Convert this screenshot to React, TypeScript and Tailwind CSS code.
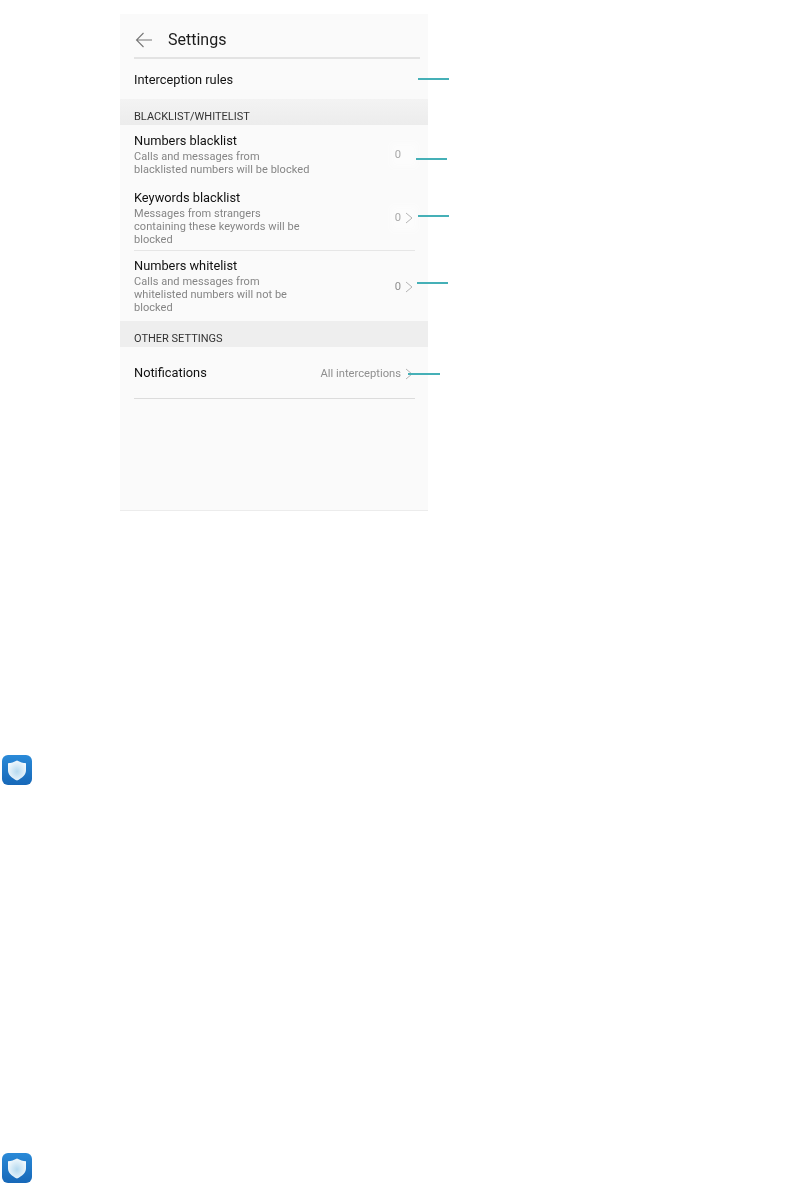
import React from "react";

function Chevron() {
  return (
    <svg width="8" height="12" viewBox="0 0 8 12" fill="none">
      <path d="M1 1l6 5-6 5" stroke="#b4b4b4" strokeWidth="1" />
    </svg>
  );
}

function ShieldIcon({ id }: { id: string }) {
  return (
    <div className="w-[30px] h-[30px] rounded-[6px] bg-gradient-to-b from-[#2a8ad8] to-[#1768b8] flex items-center justify-center">
      <svg width="20" height="23" viewBox="0 0 20 23">
        <defs>
          <radialGradient id={id} cx="0.5" cy="0.55" r="0.6">
            <stop offset="0" stopColor="#b5d9ef" />
            <stop offset="1" stopColor="#f6fbfe" />
          </radialGradient>
        </defs>
        <path
          d="M10 1.500c3 1.700 6 2.500 9 2.700v7c0 4.500-4 8-9 10.300C5 19.200 1 15.700 1 11.200v-7c3-.2 6-1 9-2.700z"
          fill={`url(#${id})`}
        />
      </svg>
    </div>
  );
}

function Callout({ top, left, width }: { top: number; left: number; width: number }) {
  return <div className="absolute h-[2px] bg-[#45b0b7]" style={{ top, left, width }} />;
}

function Row({
  title,
  lines,
  value,
  chevron = true,
  blurred = false,
  className = "",
}: {
  title: string;
  lines: string[];
  value: string;
  chevron?: boolean;
  blurred?: boolean;
  className?: string;
}) {
  return (
    <div className={`flex items-center justify-between pl-[14px] pr-[15px] ${className}`}>
      <div>
        <div className="text-[12.8px] leading-[16px] text-[#111111]">{title}</div>
        {lines.length > 0 && (
          <div className="mt-[1px]">
            {lines.map((l) => (
              <div key={l} className="text-[11px] leading-[13px] tracking-[0.05px] text-[#858585]">
                {l}
              </div>
            ))}
          </div>
        )}
      </div>
      <div className="pt-[2px]">
        <div
          className={`flex items-center gap-[4px] text-[11.2px] ${
            blurred ? "text-[#a8a8a8] bg-[#fcfcfc] shadow-[0_0_6px_4px_#fcfcfc]" : "text-[#8f8f8f]"
          }`}
        >
          <span>{value}</span>
          {chevron ? <Chevron /> : <span className="w-2" />}
        </div>
      </div>
    </div>
  );
}

export default function App() {
  return (
    <div className="relative bg-white h-[1183px] pt-[14px] font-['Roboto',sans-serif] overflow-hidden">
      <div className="ml-[120px] w-[308px] h-[497px] bg-[#fafafa] border-b border-[#ececec] flex flex-col blur-[0.3px]">
        <div className="h-[43px] pt-[8px] flex items-center pl-[15px] gap-[15px] shrink-0">
          <svg width="18" height="16" viewBox="0 0 18 16" fill="none">
            <path d="M17 8H1.500M8.500 1L1.500 8l7 7" stroke="#777777" strokeWidth="1.100" />
          </svg>
          <span className="text-[16px] text-[#1c1c1c]">Settings</span>
        </div>
        <div className="h-[2px] ml-[14px] mr-[8px] bg-[#e3e3e3] shrink-0" />
        <div className="h-[40px] pt-[1px] flex items-center pl-[14px] text-[12.8px] text-[#111111] shrink-0">
          Interception rules
        </div>
        <div className="h-[26px] flex items-end pl-[14px] text-[11px] text-[#333333] bg-gradient-to-b from-[#f3f3f3] to-[#ececec] shrink-0">
          BLACKLIST/WHITELIST
        </div>
        <Row
          title="Numbers blacklist"
          lines={["Calls and messages from", "blacklisted numbers will be blocked"]}
          value="0"
          chevron={false}
          blurred
          className="h-[58px] shrink-0"
        />
        <Row
          title="Keywords blacklist"
          lines={["Messages from strangers", "containing these keywords will be", "blocked"]}
          value="0"
          blurred
          className="h-[67px] pt-[2px] shrink-0"
        />
        <div className="h-px ml-[14px] mr-[13px] bg-[#e6e6e6] shrink-0" />
        <Row
          title="Numbers whitelist"
          lines={["Calls and messages from", "whitelisted numbers will not be", "blocked"]}
          value="0"
          className="h-[70px] shrink-0"
        />
        <div className="h-[26px] flex items-end pl-[14px] text-[11px] text-[#333333] bg-[#eeeeee] shrink-0">
          OTHER SETTINGS
        </div>
        <Row title="Notifications" lines={[]} value="All interceptions" className="h-[51px] pt-[1px] shrink-0" />
        <div className="h-px ml-[14px] mr-[13px] bg-[#dcdcdc] shrink-0" />
      </div>

      <div className="ml-[2px] mt-[244px]">
        <ShieldIcon id="shield-a" />
      </div>
      <div className="ml-[2px] mt-[368px]">
        <ShieldIcon id="shield-b" />
      </div>

      <Callout top={78} left={418} width={31} />
      <Callout top={158} left={416} width={31} />
      <Callout top={215} left={418} width={31} />
      <Callout top={282} left={417} width={31} />
      <Callout top={373} left={408} width={32} />
    </div>
  );
}
